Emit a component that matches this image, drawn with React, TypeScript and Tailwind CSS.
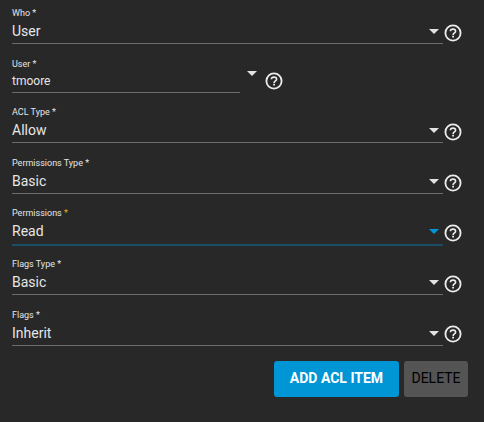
import React from "react";

type FieldProps = {
  label: string;
  value: string;
  rowClass: string;
  iconClass?: string;
  active?: boolean;
};

function HelpIcon() {
  return (
    <svg viewBox="0 0 20 20" className="size-5 shrink-0 fill-none stroke-[#ececec]" aria-hidden="true">
      <circle cx="10" cy="10" r="7.600" strokeWidth="1.800" />
      <path d="M7.400 8.300a2.600 2.200 0 0 1 5.200 0c0 1.600-2.500 1.700-2.500 3.600" strokeWidth="1.600" />
      <path d="M10.100 12.700v1.700" strokeWidth="1.800" />
    </svg>
  );
}

function Caret({ className }: { className: string }) {
  return (
    <svg viewBox="0 0 10 5" className={`h-[5px] w-[10px] shrink-0 ${className}`} aria-hidden="true">
      <path d="M0 0h10L5 5z" />
    </svg>
  );
}

function Label({ text, active }: { text: string; active?: boolean }) {
  return (
    <span className="block h-3 whitespace-nowrap text-[9px] leading-3">
      {text} <span className={active ? "text-[#e5b50b]" : ""}>*</span>
    </span>
  );
}

function SelectField({ label, value, rowClass, iconClass = "pb-px", active }: FieldProps) {
  return (
    <div className={`flex items-end ${rowClass}`}>
      <div className={`flex w-[431px] flex-col ${active ? "border-b-2 border-[#1b4e65]" : "border-b border-[#6c6c6c]"}`}>
        <Label text={label} active={active} />
        <div className={`flex items-center justify-between pr-1 ${active ? "h-[25px] pb-px" : "h-6"}`}>
          <span className="text-sm leading-6">{value}</span>
          <Caret className={active ? "fill-[#0095d5]" : "fill-[#e2e2e2]"} />
        </div>
      </div>
      <div className={iconClass}>
        <HelpIcon />
      </div>
    </div>
  );
}

export default function App() {
  return (
    <main className="h-[422px] w-[484px] overflow-hidden bg-[#282828] pl-3 font-[Roboto,sans-serif] text-[#e6e6e6]">
      <SelectField label="Who" value="User" rowClass="h-11" />
      <div className="flex h-[49px] items-end">
        <div className="w-[228px] border-b border-[#6c6c6c]">
          <Label text="User" />
          <div className="h-[22px] text-[12px] leading-[22px]">tmoore</div>
        </div>
        <div className="ml-[7px] pb-[17px]">
          <Caret className="fill-[#e2e2e2]" />
        </div>
        <div className="ml-[7px] pb-[2px]">
          <HelpIcon />
        </div>
      </div>
      <SelectField label="ACL Type" value="Allow" rowClass="h-[50px]" />
      <SelectField label="Permissions Type" value="Basic" rowClass="h-[51px]" />
      <SelectField label="Permissions" value="Read" rowClass="h-[52px]" iconClass="pb-[3px]" active />
      <SelectField label="Flags Type" value="Basic" rowClass="h-[49px]" />
      <SelectField label="Flags" value="Inherit" rowClass="h-[51px]" iconClass="pb-[2px]" />
      <div className="mt-[15px] flex justify-end gap-[5px] pr-4">
        <button className="h-9 w-[125px] rounded-[3px] bg-[#0095d5] pb-[2px] text-sm font-bold text-white">ADD ACL ITEM</button>
        <button className="h-9 w-16 rounded-[3px] bg-[#545454] pb-[2px] text-sm text-black">DELETE</button>
      </div>
    </main>
  );
}
